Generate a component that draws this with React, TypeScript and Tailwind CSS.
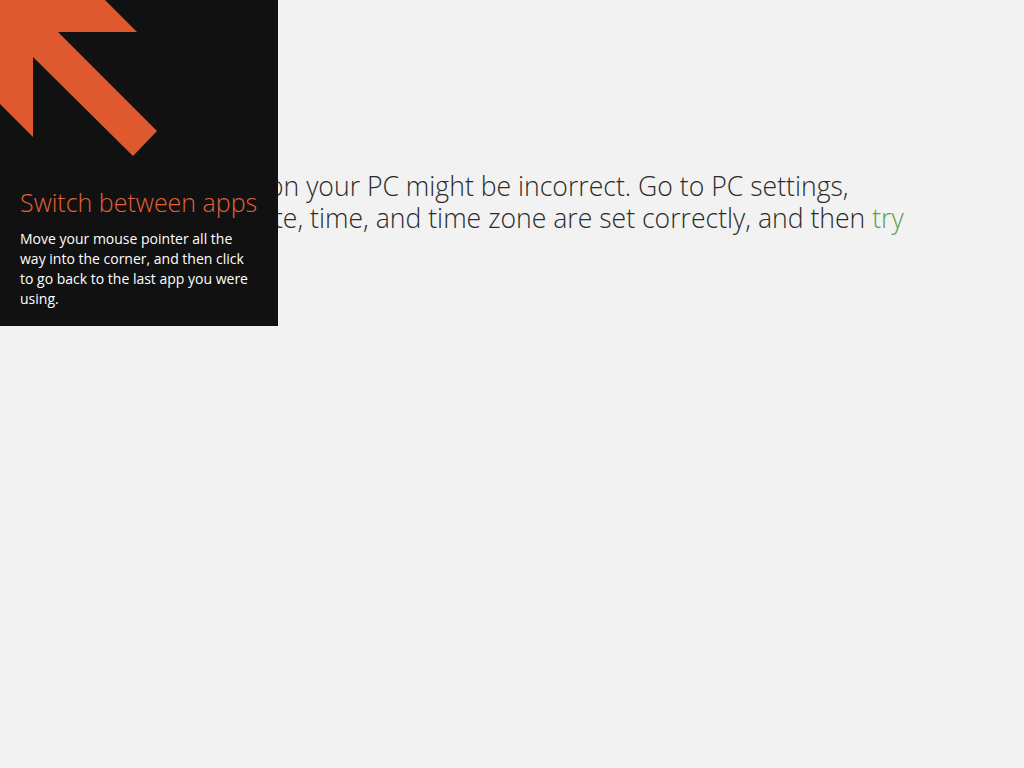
export default function App() {
  return (
    <div className="relative min-h-screen w-full overflow-hidden bg-[#f2f2f2]" style={{ fontFamily: '"Open Sans", "Noto Sans", sans-serif' }}>
      {/* error message under the tip */}
      <div className="pt-[170px] text-[26.6px] font-light leading-[32px] text-[#2b2b2b]">
        <div className="pl-[44px]">The date and time on your PC might be incorrect. Go to PC settings,</div>
        <div className="pl-[66px]">
          make sure the date, time, and time zone are set correctly, and then <span className="text-[#5ba04b]">try</span>
        </div>
        <div className="pl-[66px] text-[#5ba04b]">again.</div>
      </div>

      {/* corner tip */}
      <div className="absolute left-0 top-0 flex h-[326px] w-[278px] flex-col bg-[#111111]">
        <svg width="160" height="160" viewBox="0 0 160 160" className="shrink-0">
          <polygon points="0,0 105,0 137,32 58,32 157,131 133,156 33,57 33,137 0,104" fill="#de5a2e" />
        </svg>
        <div className="px-5 pt-[27px]">
          <div className="text-[25px] font-light leading-[30px] text-[#e2613a]">Switch between apps</div>
          <div className="mt-[12px] text-[14px] leading-[20px] text-white">
            Move your mouse pointer all the way into the corner, and then click to go back to the last app you were using.
          </div>
        </div>
      </div>
    </div>
  )
}
